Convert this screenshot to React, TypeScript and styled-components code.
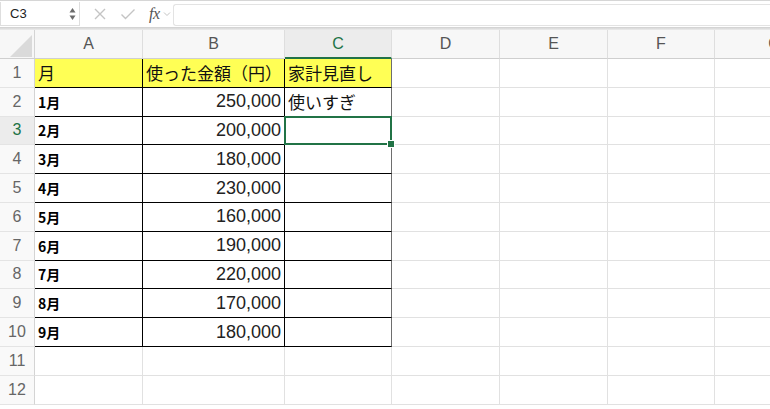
import styled, { createGlobalStyle, css } from "styled-components";

const GlobalStyle = createGlobalStyle`
  html, body {
    margin: 0;
    padding: 0;
    background: #ffffff;
    overflow: hidden;
  }
  body {
    font-family: "Liberation Sans", "Noto Sans CJK JP", sans-serif;
  }
`;

const COLUMNS = ["A", "B", "C", "D", "E", "F", "G"];
const COL_WIDTHS = [108, 142, 107, 108, 108, 107, 120];
const GREEN = "#217346";

type Row = { label: string; amount: string; note: string };

const DATA: Row[] = [
  { label: "1月", amount: "250,000", note: "使いすぎ" },
  { label: "2月", amount: "200,000", note: "" },
  { label: "3月", amount: "180,000", note: "" },
  { label: "4月", amount: "230,000", note: "" },
  { label: "5月", amount: "160,000", note: "" },
  { label: "6月", amount: "190,000", note: "" },
  { label: "7月", amount: "220,000", note: "" },
  { label: "8月", amount: "170,000", note: "" },
  { label: "9月", amount: "180,000", note: "" },
];

const ROW_COUNT = 12;
const SELECTED = { col: 2, row: 3 };

const App = () => {
  const cellFor = (row: number, col: number) => {
    const inTable = row <= 10 && col <= 2;
    const selected = row === SELECTED.row && col === SELECTED.col;
    let content = "";
    let kind: "text" | "month" | "number" = "text";
    if (row === 1) {
      content = ["月", "使った金額（円）", "家計見直し"][col] ?? "";
    } else if (row <= 10) {
      const d = DATA[row - 2];
      if (col === 0) {
        content = d.label;
        kind = "month";
      } else if (col === 1) {
        content = d.amount;
        kind = "number";
      } else if (col === 2) {
        content = d.note;
      }
    }
    return (
      <Cell
        key={`c_${row}_${col}`}
        $table={inTable}
        $header={row === 1 && inTable}
        $kind={kind}
        $selected={selected}
        $lastTableCol={inTable && col === 2}
      >
        {content}
      </Cell>
    );
  };

  return (
    <Page>
      <GlobalStyle />
      <FormulaBar>
        <NameBox>
          <span>C3</span>
          <Spinner>
            <svg width="7" height="14" viewBox="0 0 7 14">
              <path d="M3.5 1 L6.5 5.5 L0.5 5.5 Z" fill="#6b6b6b" />
              <path d="M3.5 13 L6.5 8.5 L0.5 8.5 Z" fill="#6b6b6b" />
            </svg>
          </Spinner>
        </NameBox>
        <BarIcons>
          <svg width="14" height="14" viewBox="0 0 14 14">
            <path d="M2 2 L12 12 M12 2 L2 12" stroke="#c4c4c4" strokeWidth="1.4" />
          </svg>
          <svg width="16" height="14" viewBox="0 0 16 14">
            <path d="M1.5 7.5 L5.5 11.5 L14.5 2.5" stroke="#c4c4c4" strokeWidth="1.4" fill="none" />
          </svg>
          <Fx>
            <i>fx</i>
            <svg width="8" height="6" viewBox="0 0 8 6">
              <path d="M1 1.5 L4 4.5 L7 1.5" stroke="#c4c4c4" strokeWidth="1" fill="none" />
            </svg>
          </Fx>
        </BarIcons>
        <FormulaInput />
      </FormulaBar>
      <Divider />
      <Sheet>
        <Corner>
          <svg width="30" height="26" viewBox="0 0 30 26">
            <path d="M28 3 L28 25 L6 25 Z" fill="#dadada" />
          </svg>
        </Corner>
        {COLUMNS.map((c, i) => (
          <ColHeader key={c} $active={i === SELECTED.col}>
            {c}
          </ColHeader>
        ))}
        {Array.from({ length: ROW_COUNT }, (_, r) => r + 1).map((row) => (
          <RowGroup key={`r_${row}`}>
            <RowHeader $active={row === SELECTED.row}>{row}</RowHeader>
            {COLUMNS.map((_, col) => cellFor(row, col))}
          </RowGroup>
        ))}
      </Sheet>
    </Page>
  );
};

export default App;

const Page = styled.div`
  width: 770px;
  height: 409px;
  overflow: hidden;
  background: #ffffff;
`;

const FormulaBar = styled.div`
  height: 26px;
  display: flex;
  align-items: center;
  border-top: 1px solid #d6d6d6;
  background: #ffffff;
`;

const NameBox = styled.div`
  width: 80px;
  height: 24px;
  box-sizing: border-box;
  border: 1px solid #dedede;
  border-top: none;
  display: flex;
  align-items: center;
  justify-content: space-between;
  padding: 0 3px 0 9px;
  font-size: 13px;
  color: #222;
`;

const Spinner = styled.span`
  display: flex;
  align-items: center;
`;

const BarIcons = styled.div`
  display: flex;
  align-items: center;
  gap: 13px;
  padding-left: 13px;
  width: 80px;
`;

const Fx = styled.span`
  display: flex;
  align-items: center;
  gap: 3px;

  & > i {
    font-family: "Liberation Serif", serif;
    font-size: 16px;
    color: #555;
    letter-spacing: -0.5px;
  }
`;

const FormulaInput = styled.div`
  flex: 1;
  height: 20px;
  margin-top: 2px;
  border: 1px solid #e3e3e3;
  border-right: none;
  border-radius: 3px 0 0 3px;
`;

const Divider = styled.div`
  height: 3px;
  background: linear-gradient(#cfcfcf, #ececec);
`;

const Sheet = styled.div`
  display: grid;
  grid-template-columns: 35px ${COL_WIDTHS.map((w) => `${w}px`).join(" ")};
  grid-template-rows: 29px repeat(${ROW_COUNT}, 28.8px);
`;

const RowGroup = styled.div`
  display: contents;
`;

const Corner = styled.div`
  background: #f7f7f7;
  border-right: 1px solid #d4d4d4;
  border-bottom: 1px solid #cfcfcf;
  display: flex;
  align-items: flex-end;
  justify-content: flex-end;
  overflow: hidden;
`;

const ColHeader = styled.div<{ $active: boolean }>`
  background: ${(p) => (p.$active ? "#ececec" : "#f7f7f7")};
  border-right: 1px solid #dedede;
  border-bottom: ${(p) => (p.$active ? `2px solid ${GREEN}` : "1px solid #cfcfcf")};
  display: flex;
  align-items: center;
  justify-content: center;
  font-size: 16px;
  color: ${(p) => (p.$active ? GREEN : "#555")};
  padding-bottom: ${(p) => (p.$active ? "0" : "1px")};
`;

const RowHeader = styled.div<{ $active: boolean }>`
  background: ${(p) => (p.$active ? "#ececec" : "#f9f9f9")};
  border-right: 1px solid #d4d4d4;
  border-bottom: 1px solid #e4e4e4;
  display: flex;
  align-items: center;
  justify-content: center;
  font-size: 16px;
  color: ${(p) => (p.$active ? GREEN : "#666")};
`;

const Cell = styled.div<{
  $table: boolean;
  $header: boolean;
  $kind: "text" | "month" | "number";
  $selected: boolean;
  $lastTableCol: boolean;
}>`
  position: relative;
  box-sizing: border-box;
  border-right: 1px solid ${(p) => (p.$table ? "#000" : "#e1e1e1")};
  border-bottom: 1px solid ${(p) => (p.$table ? "#000" : "#e1e1e1")};
  background: ${(p) => (p.$header ? "#ffff55" : "#ffffff")};
  display: flex;
  align-items: center;
  padding: 0 3px;
  white-space: nowrap;
  overflow: visible;
  color: #111;
  font-size: 17px;
  font-family: "Liberation Sans", "Noto Sans CJK JP", sans-serif;

  ${(p) =>
    p.$lastTableCol &&
    css`
      border-right-color: #6e6e6e;
    `}

  ${(p) =>
    p.$kind === "number" &&
    css`
      justify-content: flex-end;
      font-size: 18px;
      color: #222;
    `}

  ${(p) =>
    p.$kind === "month" &&
    css`
      font-family: "Noto Sans CJK JP", sans-serif;
      font-size: 14px;
      font-weight: 700;
      color: #000;
    `}

  ${(p) =>
    p.$selected &&
    css`
      &::after {
        content: "";
        position: absolute;
        left: -1px;
        top: -1px;
        right: -1px;
        bottom: -1px;
        border: 2px solid ${GREEN};
        pointer-events: none;
      }
      &::before {
        content: "";
        position: absolute;
        right: -4px;
        bottom: -4px;
        width: 6px;
        height: 6px;
        background: ${GREEN};
        border: 1px solid #fff;
        z-index: 2;
      }
    `}
`;
